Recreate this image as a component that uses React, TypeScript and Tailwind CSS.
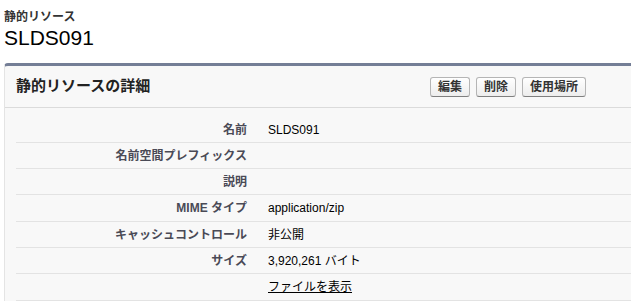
const rows: { label: string; value: string; link?: boolean }[] = [
  { label: "名前", value: "SLDS091" },
  { label: "名前空間プレフィックス", value: "" },
  { label: "説明", value: "" },
  { label: "MIME タイプ", value: "application/zip" },
  { label: "キャッシュコントロール", value: "非公開" },
  { label: "サイズ", value: "3,920,261 バイト" },
  { label: "", value: "ファイルを表示", link: true },
]

function Btn({ children }: { children: string }) {
  return (
    <button className="h-[20px] px-[7px] rounded-[3px] border border-[#b5b5b5] border-b-[#7f7f7f] bg-gradient-to-b from-white to-[#ededed] text-[12px] font-bold text-[#333] leading-none">
      {children}
    </button>
  )
}

export default function App() {
  return (
    <div
      className="w-[631px] h-[302px] overflow-hidden bg-white text-black"
      style={{ fontFamily: '"Liberation Sans", "Noto Sans CJK JP", sans-serif' }}
    >
      <div className="pl-[4px] pt-[9px]">
        <div className="text-[12px] font-bold text-[#333] leading-[16px]">静的リソース</div>
        <div className="text-[21px] leading-[24px] mt-[1px]">SLDS091</div>
      </div>

      <div className="ml-[4px] mt-[13px] w-[650px] border-t-[3px] border-t-[#747e96] border-l border-l-[#e4e4e4] bg-[#f8f8f8] rounded-tl-[4px]">
        <div className="h-[42px] flex items-center border-b border-[#dbdbdb] pl-[11px]">
          <div className="w-[414px] text-[15px] font-bold text-[#222]">静的リソースの詳細</div>
          <div className="flex gap-[6px]">
            <Btn>編集</Btn>
            <Btn>削除</Btn>
            <Btn>使用場所</Btn>
          </div>
        </div>

        <div className="pt-[9px] pl-[11px]">
          {rows.map((r, i) => (
            <div
              key={i}
              className={`${i === 3 || i === 6 ? "h-[27px]" : "h-[26px]"} flex items-center border-b border-[#e3e3e3] text-[12px]`}
            >
              <div className="w-[231px] text-right font-bold text-[#4a4a56]">{r.label}</div>
              <div className="pl-[21px] text-black">
                {r.link ? <span className="underline">{r.value}</span> : r.value}
              </div>
            </div>
          ))}
        </div>
      </div>
    </div>
  )
}
